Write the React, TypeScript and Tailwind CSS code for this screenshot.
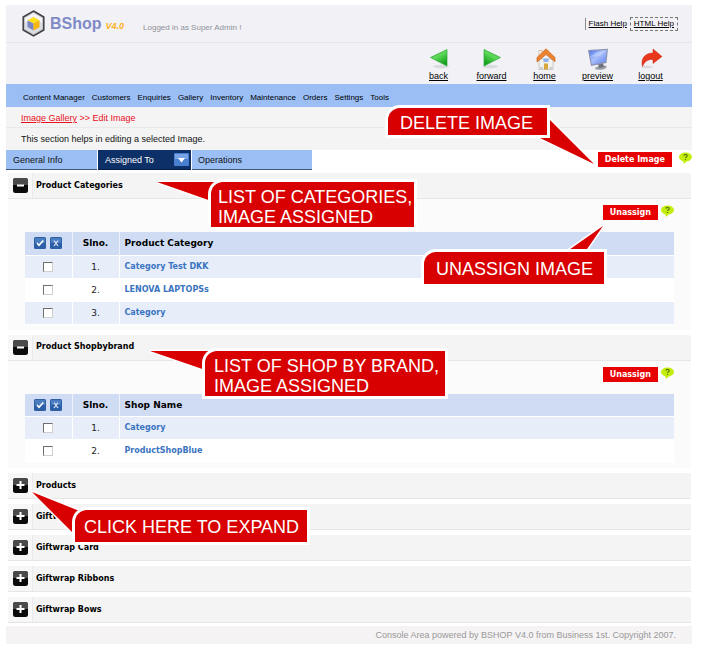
import React from "react";
import { clsx } from "clsx";

type Row = { id: string; name: string };

const NAV = ["Content Manager", "Customers", "Enquiries", "Gallery", "Inventory", "Maintenance", "Orders", "Settings", "Tools"];

const CATEGORIES: Row[] = [
  { id: "cat-1", name: "Category Test DKK" },
  { id: "cat-2", name: "LENOVA LAPTOPSs" },
  { id: "cat-3", name: "Category" },
];

const SHOPS: Row[] = [
  { id: "shop-1", name: "Category" },
  { id: "shop-2", name: "ProductShopBlue" },
];

const BOLD = "font-['DejaVu_Sans',sans-serif] font-bold";

function Logo() {
  return (
    <svg width="23" height="27" viewBox="0 0 23 27" aria-hidden="true">
      <path d="M11.5 1 21.8 7v13L11.5 26 1.2 20V7z" fill="#c3c5ca" stroke="#3d3f45" strokeWidth="1.5" />
      <path d="M11.5 3 20 8v11l-8.500 5L3 19V8z" fill="#dcdde2" />
      <path d="M11.500 3 20 8v5L11.500 7 3 13V8z" fill="#f4f4f7" />
      <path d="M5.500 10.500l6-3.500 6 3.200-6 3.300z" fill="#ffe01a" />
      <path d="M5.500 10.500l6 3v7l-6-3.500z" fill="#7a86c4" />
      <path d="M11.500 13.500l6-3.300v7l-6 3.300z" fill="#f6b50c" />
    </svg>
  );
}

function ArrowIcon({ flip }: { flip?: boolean }) {
  const id = flip ? "arrow-next" : "arrow-prev";
  return (
    <svg width="22" height="22" viewBox="0 0 22 22" aria-hidden="true" className={clsx(flip && "-scale-x-100")}>
      <defs>
        <linearGradient id={id} x1="0" y1="0" x2="0.6" y2="1">
          <stop offset="0" stopColor="#3fb93f" />
          <stop offset="0.5" stopColor="#5fd95a" />
          <stop offset="1" stopColor="#13a01c" />
        </linearGradient>
      </defs>
      <ellipse cx="13" cy="18.500" rx="8" ry="1.800" fill="#d9dcde" />
      <path d="M2.500 9.500 19 1.500v16.500z" fill={`url(#${id})`} stroke="#2fa735" strokeWidth="0.7" strokeLinejoin="round" />
    </svg>
  );
}

function HomeIcon() {
  return (
    <svg width="22" height="22" viewBox="0 0 22 22" aria-hidden="true">
      <path d="M5 11h14v10.500H5z" fill="#f1f1ee" stroke="#b9b9b9" strokeWidth="0.7" />
      <path d="M5 2.500h3v6H5z" fill="#fff" stroke="#c9a184" strokeWidth="0.7" />
      <path d="M12 .8 21 9.500v4.300L12 6.500 3 14V9.500z" fill="#ea8230" stroke="#c9651c" strokeWidth="0.7" />
      <path d="M9.500 10.500h5v3.500h-5z" fill="#8fb2ea" />
      <path d="M10 15.500h4v6h-4z" fill="#d4a83c" />
      <path d="M6 19h3v2.500H6zM15.500 19h3v2.500h-3z" fill="#cfcfc8" />
    </svg>
  );
}

function PreviewIcon() {
  return (
    <svg width="22" height="22" viewBox="0 0 22 22" aria-hidden="true">
      <defs>
        <linearGradient id="screen" x1="0" y1="0" x2="1" y2="1">
          <stop offset="0" stopColor="#4d74ea" />
          <stop offset="0.45" stopColor="#a9c0fb" />
          <stop offset="1" stopColor="#5f80ee" />
        </linearGradient>
      </defs>
      <path d="M8 20c2-2 9-3.500 11.500-2 1 2-2.500 3.800-6 3.800S8 21.500 8 20z" fill="#9a9ea6" />
      <path d="M11 15h5l1 4-5 1z" fill="#6c7078" />
      <path d="M1 2 21 .8 19.500 15 4 18z" fill="#8b93b4" />
      <path d="M2.300 3 19.800 2 18.500 13.800 4.800 16.500z" fill="url(#screen)" />
      <path d="M3 9 10 4l9-1.500-6 5.500z" fill="#c5d4ff" opacity="0.6" />
    </svg>
  );
}

function LogoutIcon() {
  return (
    <svg width="22" height="22" viewBox="0 0 22 22" aria-hidden="true">
      <ellipse cx="7" cy="19" rx="6" ry="1.300" fill="#d9d9de" />
      <path d="M13 1l9 7.500-9 7v-4C8 11 4.500 13.500 2.500 18.500.5 10.500 5 5 13 5z" fill="#e8371d" stroke="#c9230f" strokeWidth="0.5" />
    </svg>
  );
}

const TOOLS = [
  { label: "back", icon: <ArrowIcon /> },
  { label: "forward", icon: <ArrowIcon flip /> },
  { label: "home", icon: <HomeIcon /> },
  { label: "preview", icon: <PreviewIcon /> },
  { label: "logout", icon: <LogoutIcon /> },
];

function HelpBubble() {
  return (
    <button type="button" aria-label="Help" className="block h-3 w-[13px] shrink-0">
      <svg width="13" height="12" viewBox="0 0 13 12">
        <ellipse cx="6.500" cy="5" rx="6.500" ry="4.600" fill="#c3ee0c" />
        <path d="M4 8.500 5 12l3-3z" fill="#c3ee0c" />
        <path d="M4.800 3.600c.2-1.700 3.400-1.600 3.400.1 0 1-1.500 1.100-1.600 2.300M6.500 7v1" fill="none" stroke="#5d7d10" strokeWidth="1.200" />
      </svg>
    </button>
  );
}

function RedButton({ children }: { children: React.ReactNode }) {
  return (
    <button type="button" className={clsx(BOLD, "h-[15px] bg-[#e80000] px-[7px] text-[8px] leading-[15px] whitespace-nowrap text-white")}>
      {children}
    </button>
  );
}

function SectionHeader({ title, open }: { title: string; open?: boolean }) {
  return (
    <h2>
      <button
        type="button"
        aria-expanded={!!open}
        className="flex h-[26px] w-full items-stretch border-b border-[#e6e6e6] bg-[#f4f4f4] text-left"
      >
        <span className="flex w-[25px] items-center justify-center border-r border-[#eaeaea] bg-[#f7f7f7]">
          <svg width="15" height="15" viewBox="0 0 15 15" aria-hidden="true">
            <rect width="15" height="15" rx="2.500" fill="#0a0a0a" />
            <path d="M2.500 0h10A2.500 2.500 0 0 1 15 2.500V7H0V2.500A2.500 2.500 0 0 1 2.500 0z" fill="#4a4a4a" />
            <path d={open ? "M4 7.500h7" : "M3.500 7h8M7.500 3v8"} stroke="#fff" strokeWidth="2" />
          </svg>
        </span>
        <span className={clsx(BOLD, "self-center pl-[3px] text-[8px] leading-3 text-black")}>{title}</span>
      </button>
    </h2>
  );
}

function SelectButton({ label, all }: { label: string; all?: boolean }) {
  return (
    <button type="button" aria-label={label} className="block size-3">
      <svg width="12" height="12" viewBox="0 0 12 12">
        <rect width="12" height="12" rx="1.500" fill="#2c5fa5" />
        <path d="M1 1h10v5H1z" fill="#4a7dc0" />
        {all ? (
          <path d="M3 6l2 2.200L9.300 3.500" fill="none" stroke="#fff" strokeWidth="1.700" />
        ) : (
          <path d="M4 3.500 8 9M8 3.500 4 9" fill="none" stroke="#e3edfb" strokeWidth="1.200" />
        )}
      </svg>
    </button>
  );
}

function AssignedTable({ heading, rows }: { heading: string; rows: Row[] }) {
  return (
    <table className="w-full table-fixed border-collapse">
      <thead>
        <tr className={clsx(BOLD, "h-[23px] border-b border-white bg-[#cfdcf4] text-[9px] leading-3 text-black")}>
          <th className="w-[47px] border-r border-[#edf2fb] p-0">
            <span className="flex justify-center gap-1">
              <SelectButton label="Select all" all />
              <SelectButton label="Clear selection" />
            </span>
          </th>
          <th className="w-[47px] border-r border-[#edf2fb] p-0 text-center">Slno.</th>
          <th className="p-0 pl-[5px] text-left">{heading}</th>
        </tr>
      </thead>
      <tbody>
        {rows.map((row, i) => (
          <tr key={row.id} className={clsx("h-[23px] border-b border-white", i % 2 === 0 ? "bg-[#e7eefa]" : "bg-white")}>
            <td className="border-r border-white p-0">
              <input
                type="checkbox"
                aria-label={`Select ${row.name}`}
                className="mx-auto block size-[10px] appearance-none border border-t-[#6e6e6e] border-r-[#cfcfcf] border-b-[#cfcfcf] border-l-[#6e6e6e] bg-white checked:bg-[#2c5fa5]"
              />
            </td>
            <td className="border-r border-white p-0 text-center font-['DejaVu_Sans',sans-serif] text-[9px] leading-3 text-[#222]">{i + 1}.</td>
            <td className={clsx(BOLD, "p-0 pl-[5px] text-[8px] leading-3")}>
              <a href="#" className="text-[#3a74c0]">{row.name}</a>
            </td>
          </tr>
        ))}
      </tbody>
    </table>
  );
}

function OpenSection({ title, heading, rows }: { title: string; heading: string; rows: Row[] }) {
  return (
    <section>
      <SectionHeader title={title} open />
      <div className="bg-[#fbfbfb] px-[17px] pb-[5px]">
        <div className="flex h-[33px] items-start justify-end gap-[3px] pt-[6px]">
          <RedButton>Unassign</RedButton>
          <HelpBubble />
        </div>
        <AssignedTable heading={heading} rows={rows} />
      </div>
    </section>
  );
}

function Callout({ place, tail, box, children }: { place: string; tail: React.ReactNode; box: string; children: React.ReactNode }) {
  return (
    <div className={clsx("pointer-events-none absolute", place)}>
      {tail}
      <div
        className={clsx(
          "relative rounded-tl-[12px] bg-[#d80000] font-['Liberation_Sans',Arial,sans-serif] text-[18px] leading-5 whitespace-nowrap text-white shadow-[0_0_0_3px_#fff]",
          box,
        )}
      >
        {children}
      </div>
    </div>
  );
}

function Tail({ points, place }: { points: string; place: string }) {
  return (
    <svg width="70" height="60" viewBox="0 0 70 60" aria-hidden="true" className={clsx("absolute", place)}>
      <polygon points={points} fill="#d80000" stroke="#fff" strokeWidth="3" strokeLinejoin="miter" paintOrder="stroke" />
    </svg>
  );
}

export default function App() {
  return (
    <div className="relative bg-white pt-[5px] pr-[10px] pb-[5px] pl-[6px] font-['Liberation_Sans',Arial,sans-serif] text-[9px] leading-3 text-[#111]">
      <header className="bg-[#f2f2f6]">
        <div className="flex h-[38px] items-center border-b border-[#e4e6ec] pr-[14px] pl-4">
          <Logo />
          <h1 className="flex items-baseline gap-1 pl-[5px] font-bold">
            <span className="text-[16px] leading-5 text-[#7f8ac6]">BShop</span>
            <em className="text-[9px] text-[#f9b01c]">V4.0</em>
          </h1>
          <p className="pt-2 pl-[19px] text-[8px] text-[#8f8f98]">Logged in as Super Admin !</p>
          <nav aria-label="Help" className="ml-auto flex items-center gap-[3px] text-[8px] text-black">
            <a href="#" className="border-l border-[#888] pl-[3px] underline">Flash Help</a>
            <a href="#" className="border border-dashed border-[#777] px-[3px] underline">HTML Help</a>
          </nav>
        </div>
        <nav aria-label="Tools" className="flex h-[41px] justify-end pt-[5px] pr-[15px]">
          {TOOLS.map((tool) => (
            <a key={tool.label} href="#" className="flex w-[53px] flex-col items-center text-black underline">
              {tool.icon}
              <span>{tool.label}</span>
            </a>
          ))}
        </nav>
        <nav aria-label="Main" className="flex h-[23px] items-center gap-[7px] bg-[#9bbff5] pt-1 pl-[17px] text-[8px] text-black">
          {NAV.map((item) => (
            <a key={item} href="#">{item}</a>
          ))}
        </nav>
      </header>

      <div className="bg-[#f4f4f4]">
        <p className="h-[21px] border-b border-[#e8e8e8] pt-[5px] pl-[15px] text-[#e8101c]">
          <a href="#" className="underline">Image Gallery</a> &gt;&gt; Edit Image
        </p>
        <p className="h-[22px] pt-[5px] pl-[15px]">This section helps in editing a selected Image.</p>
      </div>

      <div className="flex h-[23px] items-start">
        <div role="tablist" className="flex h-5 gap-px">
          <button type="button" role="tab" aria-selected="false" className="w-[91px] border-b border-[#3f587f] bg-[#9bbff5] pl-[7px] text-left">
            General Info
          </button>
          <button type="button" role="tab" aria-selected="true" className="flex w-[93px] items-center justify-between border-b border-[#071d48] bg-[#0d3068] pr-[2px] pl-[7px] text-white">
            Assigned To
            <svg width="15" height="13" viewBox="0 0 15 13" aria-hidden="true">
              <rect width="15" height="13" rx="1" fill="#4a7fd0" />
              <path d="M1 1h13v5H1z" fill="#79a5e6" />
              <path d="M4 5h7L7.500 9.500z" fill="#fff" />
            </svg>
          </button>
          <button type="button" role="tab" aria-selected="false" className="w-[120px] border-b border-[#3f587f] bg-[#9bbff5] pl-[6px] text-left">
            Operations
          </button>
        </div>
        <div className="ml-auto flex items-start gap-[7px] pt-[2px]">
          <RedButton>Delete Image</RedButton>
          <HelpBubble />
        </div>
      </div>

      <main className="mr-px ml-[2px] flex flex-col gap-[5px]">
        <OpenSection title="Product Categories" heading="Product Category" rows={CATEGORIES} />
        <OpenSection title="Product Shopbybrand" heading="Shop Name" rows={SHOPS} />
        <SectionHeader title="Products" />
        <SectionHeader title="Giftwrap" />
        <SectionHeader title="Giftwrap Card" />
        <SectionHeader title="Giftwrap Ribbons" />
        <SectionHeader title="Giftwrap Bows" />
      </main>

      <footer className="mt-[3px] bg-[#f5f3f4] py-[3px] pr-4 text-right text-[#999]">
        Console Area powered by BSHOP V4.0 from Business 1st. Copyright 2007.
      </footer>

      <Callout place="top-[108px] right-[155px]" box="w-[159px] py-[5px] pl-3 h-[27px]" tail={<Tail place="top-0 left-[150px]" points="2,30 12,12 56,56" />}>
        DELETE IMAGE
      </Callout>
      <Callout place="top-[182px] left-[211px]" box="w-[203px] h-[45px] pt-[5px] pl-[7px]" tail={<Tail place="-top-[4px] -left-[60px]" points="6,4 66,4 66,25" />}>
        LIST OF CATEGORIES,
        <br />
        IMAGE ASSIGNED
      </Callout>
      <Callout place="top-[252px] right-[98px]" box="w-[180px] h-[32px] py-[7px] pl-3" tail={<Tail place="-top-[36px] left-[140px]" points="2,36 39,10 21,36" />}>
        UNASSIGN IMAGE
      </Callout>
      <Callout place="top-[351px] left-[205px]" box="w-[240px] h-[45px] pt-[5px] pl-[9px]" tail={<Tail place="-top-[4px] -left-[60px]" points="5,4 66,4 66,25" />}>
        LIST OF SHOP BY BRAND,
        <br />
        IMAGE ASSIGNED
      </Callout>
      <Callout place="top-[510px] left-[75px]" box="w-[232px] h-[32px] py-[7px] pl-[9px]" tail={<Tail place="-top-[24px] -left-[50px]" points="7,6 62,28 50,49" />}>
        CLICK HERE TO EXPAND
      </Callout>
    </div>
  );
}
